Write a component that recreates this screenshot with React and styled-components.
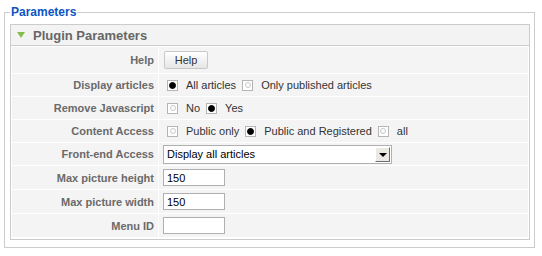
import React from 'react';
import styled, { createGlobalStyle } from 'styled-components';

const GlobalStyle = createGlobalStyle`
  body {
    margin: 0;
    background: #fff;
    font-family: "Liberation Sans", Arial, sans-serif;
  }
`;

function Radio({ label, checked }) {
  return (
    <RadioItem>
      <RadioBox checked={checked} />
      <span>{label}</span>
    </RadioItem>
  );
}

function App() {
  return (
    <>
      <GlobalStyle />
      <Page>
        <Fieldset>
          <Legend>Parameters</Legend>
          <Panel>
            <PanelTitle>
              <Arrow />
              Plugin Parameters
            </PanelTitle>
            <ParamTable>
              <Row height={26}>
                <Key>Help</Key>
                <Value>
                  <Button>Help</Button>
                </Value>
              </Row>
              <Row height={22}>
                <Key>Display articles</Key>
                <Value>
                  <Radio label="All articles" checked />
                  <Radio label="Only published articles" />
                </Value>
              </Row>
              <Row height={22}>
                <Key>Remove Javascript</Key>
                <Value>
                  <Radio label="No" />
                  <Radio label="Yes" checked />
                </Value>
              </Row>
              <Row height={22}>
                <Key>Content Access</Key>
                <Value>
                  <Radio label="Public only" />
                  <Radio label="Public and Registered" checked />
                  <Radio label="all" />
                </Value>
              </Row>
              <Row height={22}>
                <Key>Front-end Access</Key>
                <Value>
                  <Select>
                    <span>Display all articles</span>
                    <SelectButton />
                  </Select>
                </Value>
              </Row>
              <Row height={23}>
                <Key>Max picture height</Key>
                <Value>
                  <TextInput defaultValue="150" />
                </Value>
              </Row>
              <Row height={23}>
                <Key>Max picture width</Key>
                <Value>
                  <TextInput defaultValue="150" />
                </Value>
              </Row>
              <Row height={23}>
                <Key>Menu ID</Key>
                <Value>
                  <TextInput defaultValue="" />
                </Value>
              </Row>
            </ParamTable>
          </Panel>
        </Fieldset>
      </Page>
    </>
  );
}

export default App;

const Page = styled.div`
  padding: 5px 0 0 4px;
`;

const Fieldset = styled.fieldset`
  box-sizing: border-box;
  width: 531px;
  margin: 0;
  padding: 5px 4px 7px 5px;
  border: 1px solid #ccc;
`;

const Legend = styled.legend`
  padding: 0 1px;
  color: #0b55c4;
  font-size: 12px;
  font-weight: bold;
  line-height: 14px;
`;

const Panel = styled.div`
  border: 1px solid #ccc;
  background: #fff;
`;

const PanelTitle = styled.div`
  display: flex;
  align-items: center;
  height: 20px;
  padding-left: 6px;
  background: #f3f3f3;
  border-bottom: 1px solid #ccc;
  color: #666;
  font-size: 13px;
  font-weight: bold;
`;

const Arrow = styled.span`
  width: 0;
  height: 0;
  margin-right: 8px;
  border-left: 4px solid transparent;
  border-right: 4px solid transparent;
  border-top: 6px solid #86bd4a;
`;

const ParamTable = styled.div`
  display: flex;
  flex-direction: column;
  gap: 1px;
  padding: 1px 1px 2px;
`;

const Row = styled.div`
  display: flex;
  gap: 1px;
  height: ${props => props.height}px;
`;

const Key = styled.div`
  display: flex;
  align-items: center;
  justify-content: flex-end;
  width: 146px;
  padding-right: 4px;
  box-sizing: border-box;
  background: #f4f4f4;
  color: #6a6a6a;
  font-size: 11px;
  font-weight: bold;
`;

const Value = styled.div`
  display: flex;
  align-items: center;
  flex: 1;
  gap: 2px;
  padding-left: 4px;
  background: #f4f4f4;
  color: #333;
  font-size: 11px;
`;

const Button = styled.button`
  height: 18px;
  width: 44px;
  margin-left: 1px;
  padding: 0;
  border: 1px solid #c8c8c8;
  border-radius: 2px;
  background: linear-gradient(#ffffff, #e6e6e6);
  color: #333;
  font-family: "Liberation Sans", Arial, sans-serif;
  font-size: 11px;
`;

const RadioItem = styled.label`
  display: flex;
  align-items: center;
  gap: 8px;
`;

const RadioBox = styled.span`
  position: relative;
  box-sizing: border-box;
  width: 11px;
  height: 11px;
  margin-left: 4px;
  border: 1px solid #b5b5b5;
  background: #fff;

  &::after {
    content: '';
    position: absolute;
    left: ${props => (props.checked ? '1px' : '1.5px')};
    top: ${props => (props.checked ? '1px' : '1.5px')};
    box-sizing: border-box;
    width: ${props => (props.checked ? '7px' : '6px')};
    height: ${props => (props.checked ? '7px' : '6px')};
    border-radius: 50%;
    border: 1px solid ${props => (props.checked ? '#000' : '#c8c8c8')};
    background: ${props => (props.checked ? '#000' : '#fff')};
  }
`;

const Select = styled.div`
  display: flex;
  align-items: center;
  justify-content: space-between;
  box-sizing: border-box;
  width: 229px;
  height: 19px;
  padding: 0 1px 0 3px;
  border: 1px solid #b0b0b0;
  background: #fff;
  color: #000;
  font-size: 11px;
`;

const SelectButton = styled.span`
  position: relative;
  box-sizing: border-box;
  width: 15px;
  height: 15px;
  background: #ece9e4;
  border: 1px solid;
  border-color: #fff #6e6e6e #6e6e6e #fff;

  &::after {
    content: '';
    position: absolute;
    left: 3px;
    top: 5px;
    border-left: 4px solid transparent;
    border-right: 4px solid transparent;
    border-top: 4px solid #000;
  }
`;

const TextInput = styled.input`
  box-sizing: border-box;
  width: 62px;
  height: 17px;
  padding: 0 3px;
  border: 1px solid #b0b0b0;
  background: #fff;
  color: #000;
  font-family: "Liberation Sans", Arial, sans-serif;
  font-size: 11px;
  outline: none;
`;
